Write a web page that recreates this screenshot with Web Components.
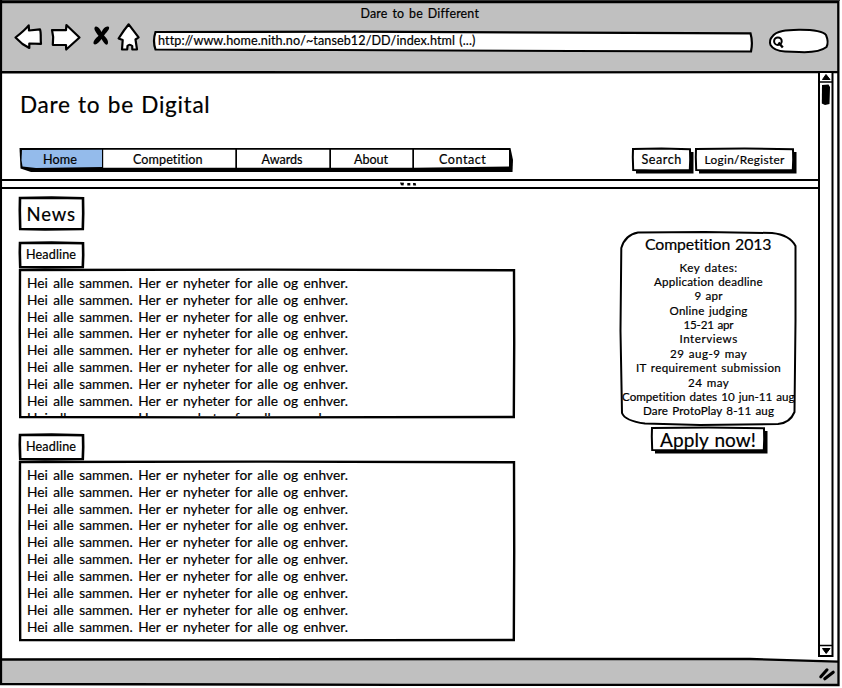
<!DOCTYPE html>
<html lang="en"><head><meta charset="utf-8"><title>Dare to be Different</title>
<style>
body{margin:0;background:#fff;color:#000;font-family:Lato,"Open Sans",sans-serif}
</style></head><body>
<browser-window></browser-window>
<script>
const define=(name,html,setup)=>customElements.define(name,class extends HTMLElement{
  connectedCallback(){
    if(this.shadowRoot)return;
    const root=this.attachShadow({mode:'open'});
    const t=document.createElement('template');
    t.innerHTML=html(this);
    root.append(t.content.cloneNode(true));
    if(setup)setup(this,root);
  }
});

/* A single line of text spaced out to a given width. */
define('fit-text',el=>`<style>
:host{display:block;width:${el.getAttribute('w')}px;font-size:${el.getAttribute('size')}px;white-space:nowrap;line-height:inherit;-webkit-text-stroke:.2px #000;flex:none}
span{display:inline-block;vertical-align:top;word-spacing:${el.getAttribute('gap')||1}px}
</style><span>${el.getAttribute('text')}</span>`,(el,root)=>{
  const s=root.querySelector('span');
  const w=s.getBoundingClientRect().width;
  s.style.letterSpacing=((+el.getAttribute('w')-w)/(el.getAttribute('text').length-.5))+'px';
});

/* A hand-drawn box: outline path in pixels plus an optional solid shadow. */
define('sketch-box',el=>{
  const w=+el.getAttribute('w'),h=+el.getAttribute('h'),s=+(el.getAttribute('shadow')||0),b=el.getAttribute('stroke')||2;
  const d=el.getAttribute('d')||`M1 1L${w*.5} .6L${w-1} 1.2L${w-.8} ${h*.5}L${w-1.2} ${h-1}L${w*.4} ${h-.6}L1.2 ${h-1}L.8 ${h*.4}Z`;
  return `<style>
:host{display:flex;position:relative;flex:none;box-sizing:border-box;width:${w}px;height:${h}px;align-items:center;justify-content:center}
svg{position:absolute;inset:0;overflow:visible;z-index:-1}
</style><svg width="${w}" height="${h}">${s?`<path d="M4 4H${w+s}V${h+s}H4Z"/>`:''}<path d="${d}" fill="#fff" stroke="#000" stroke-width="${b}" stroke-linejoin="miter"/></svg><slot></slot>`;
});

define('tool-bar',()=>`<style>
:host{display:grid;grid-template-rows:27px 1fr;height:73px}
.title{display:flex;justify-content:center;line-height:27px;padding-right:3px}
.row{display:flex;height:27px;padding-left:14px;align-items:flex-start}
svg{display:block;overflow:visible;flex:none}
.ink{fill:#fff;stroke:#000;stroke-width:2.2;stroke-linejoin:round}
.url{display:flex;position:relative;width:602px;height:22px;margin:3px 0 0 12px;padding-left:6px;box-sizing:border-box;line-height:21px;flex:none}
.url svg{position:absolute;left:0;top:0;z-index:-1}
.find{margin:0 0 0 14.5px}
</style>
<div class="title"><fit-text w="118" size="12.4" gap="1.5" text="Dare to be Different"></fit-text></div>
<div class="row">
<svg width="29" height="26" viewBox="0 0 29 26"><path class="ink" d="M1.5 10.5C6 7 11 3 14.7-1.6L15 3.5L26 2.3C27.4 6 26.3 12 27 16.8L15.3 16.5L15.3 21L8.5 17Z"/></svg>
<svg style="margin-left:8px" width="30" height="26"><path class="ink" d="M1 3L15 3.2L15.4-2L28.5 10.5L15.2 22.5L15 18L1.8 17.8Q3 10 1 3Z"/></svg>
<svg style="margin-left:12px" width="17" height="22"><path d="M2 0C0 2 3.5 6 5.5 8.7C3 11 0 14 .5 16.5C2 19 6 16 8.5 12C11 16 13 19 14.7 17C16 14 13.5 11 11 8.5C13 5.5 17 2.5 16 0C13-1.5 10.5 1 8.5 5C6.5 1 4-1.5 2 0Z"/></svg>
<svg style="margin-left:8px" width="22" height="26"><path class="ink" d="M10.7-2.7Q15 3 20.6 10.4L17.5 12.5L19 22.3L14.3 22.5L14.2 19Q11.5 16.5 9.5 19L9.2 22.5L4 22.5L4.7 13L.6 11.5Q6 3 10.7-2.7Z"/></svg>
<div class="url"><svg width="602" height="22"><path d="M3.5 2L200 1.7L598.5 3.3Q601 12 599 21.5L420 21L180 20L3.5 19.5Q.5 11 3.5 2Z" fill="#fff" stroke="#000" stroke-width="2.2"/></svg><fit-text w="317" size="12.6" text="http://www.home.nith.no/~tanseb12/DD/index.html (...)"></fit-text></div>
<svg class="find" width="60" height="26"><path d="M3 10C7 3 19 3 31 2.8C46 2.8 54 4 57 8Q60 15 57.5 20Q50 26 30 25L16 24.5Q5 24 1.5 18Q0 13 3 10Z" fill="#fff" stroke="#000" stroke-width="2"/><circle cx="8.9" cy="14.2" r="3.8" fill="none" stroke="#000" stroke-width="2"/><path d="M9.5 15.5L13.8 20.5" stroke="#000" stroke-width="2.4"/></svg>
</div>`);

define('nav-tabs',()=>`<style>
:host{display:flex;position:relative;width:493px;height:24px;flex:none;line-height:24px}
svg{position:absolute;left:0;top:0;overflow:visible;z-index:-1}
div{display:flex;justify-content:center;flex:none}
</style>
<svg width="493" height="24"><path d="M-.5 0L490.5 0L493 12L492.5 24L11 24L.5 20.5Z"/><path d="M2 2L82 1.7V19L16 20L2.5 18.5L1.5 12Z" fill="#94bbeb"/><path d="M83.2 1.8H215.3V19.8H83.2ZM217 1.8H309.3V19.8H217ZM311 1.8H392.3V19.8H311ZM394 1.8L489 2L489 18.5L394 19.8Z" fill="#fff"/></svg>
<div style="width:80px"><fit-text w="34" size="12.6" text="Home"></fit-text></div>
<div style="width:136px"><fit-text w="70" size="12.6" text="Competition"></fit-text></div>
<div style="width:92px"><fit-text w="41" size="12.6" text="Awards"></fit-text></div>
<div style="width:86px"><fit-text w="34" size="12.6" text="About"></fit-text></div>
<div style="width:97px"><fit-text w="47" size="12.6" text="Contact"></fit-text></div>`);

define('pane-splitter',()=>`<style>:host{display:block;width:816px;height:11px}svg{display:block;overflow:visible}</style>
<svg width="816" height="11"><path d="M0 1H816M0 9H816" stroke="#000" stroke-width="2"/><path d="M398 3.5l4 .2-.5 2.8-2.5-.3zM405.3 4h3v2.6h-3zM411 4h2.6l.6 2.5h-3z"/></svg>`);

define('news-item',el=>{
  const h=+el.getAttribute('h'),n=+el.getAttribute('rows');
  return `<style>
:host{display:block;width:496px}
sketch-box{justify-content:flex-start;padding-left:7px}
.head{padding-bottom:2px}
.body{align-items:flex-start;margin-top:1px;padding:5.8px 0 0 8px}
.lines{display:flex;flex-direction:column;height:${h-8}px;overflow:hidden;line-height:16.86px}
.lines fit-text{height:16.86px}
</style>
<sketch-box class="head" w="65" h="26" stroke="2.6"><fit-text w="50" size="12.6" text="Headline"></fit-text></sketch-box>
<sketch-box class="body" w="496" h="${h}" stroke="2.4"><div class="lines">${'<fit-text w="321" size="13.7" gap="1.8" text="Hei alle sammen. Her er nyheter for alle og enhver."></fit-text>'.repeat(n)}</div></sketch-box>`;
});

define('key-dates',()=>{
  const rows=[['Key dates:',58],['Application deadline',109],['9 apr',28],['Online judging',78],['15-21 apr',50],['Interviews',58],['29 aug-9 may',77],['IT requirement submission',145],['24 may',41],['Competition dates 10 jun-11 aug',173],['Dare ProtoPlay 8-11 aug',131]];
  return `<style>
:host{display:flex;flex-direction:column;align-items:center;width:177px}
.card{display:flex;flex-direction:column;align-items:center;line-height:14.4px}
.card>fit-text{height:14.4px}
.head{line-height:25px;height:25px;margin-bottom:4.5px}
.frame{align-items:flex-start}
.apply{margin:1px 0 0 -1px}
</style>
<sketch-box class="frame" w="177" h="195" d="M18 1.5L85 1L152 2Q170 4 175.5 15L175.5 90L174.5 181Q170 192 158 193L80 194L25 192.5Q5 190 2 182L.5 100L1.3 17Q5 4 18 1.5Z">
<div class="card"><div class="head"><fit-text w="127" size="15.8" gap="1" text="Competition 2013"></fit-text></div>${rows.map(([t,w])=>`<fit-text w="${w}" size="11.6" text="${t}"></fit-text>`).join('')}</div></sketch-box>
<sketch-box class="apply" w="114" h="24" shadow="2.5"><fit-text w="96" size="19" text="Apply now!"></fit-text></sketch-box>`;
});

define('scroll-bar',()=>`<style>:host{display:block;width:16px;height:584px;flex:none;margin-left:-1px}svg{display:block;overflow:visible}</style>
<svg width="16" height="584"><path d="M1 0V583H14.5V0" fill="#fff" stroke="#000" stroke-width="2"/><path d="M1 9H15M1 572.5H15" stroke="#000" stroke-width="1.6"/><path d="M8 1.5L12 6.5H4.5ZM4.5 575.5H12L8.2 580.5Z" stroke="#000" stroke-linejoin="round"/><path d="M4 12L10.5 11.5L12 14L11.5 31L7 32L3.8 30.5Z"/></svg>`);

define('site-page',()=>`<style>
:host{display:flex;height:586px;padding-left:2px}
.panes{width:817px;height:584px;flex:none}
header{box-sizing:border-box;height:106px;padding:14px 0 0 17px}
.name{line-height:36px;height:61px;padding-left:1px}
.bar{display:flex;align-items:flex-start;padding-left:1px;line-height:18px}
.bar sketch-box{margin-right:4px}
.bar nav-tabs{margin-right:119px}
main{display:flex;justify-content:space-between;padding:7px 22px 0 17px}
.news{display:flex;flex-direction:column}
.news news-item{margin-bottom:16px}
.top{margin-bottom:12px;padding-right:1px}
key-dates{margin-top:34px}
</style>
<div class="panes"><header><div class="name"><fit-text w="190" size="22.6" gap="1" text="Dare to be Digital"></fit-text></div>
<div class="bar"><nav-tabs></nav-tabs><sketch-box w="59" h="23" shadow="2.5"><fit-text w="40" size="12.6" text="Search"></fit-text></sketch-box><sketch-box w="99" h="23" shadow="2.5"><fit-text w="80" size="11.8" text="Login/Register"></fit-text></sketch-box></div></header>
<pane-splitter></pane-splitter>
<main><div class="news"><sketch-box class="top" w="65" h="33" stroke="2.6"><fit-text w="49" size="18.5" text="News"></fit-text></sketch-box>
<news-item h="149" rows="9"></news-item><news-item h="180" rows="10"></news-item></div><key-dates></key-dates></main></div>
<scroll-bar></scroll-bar>`);

define('browser-window',()=>`<style>
:host{display:block;position:relative;width:842px;height:688px;overflow:hidden;isolation:isolate}
.frame{position:absolute;inset:0;z-index:-2}
</style>
<svg class="frame" width="842" height="688"><path d="M1 1H838V72H2ZM2 659L750 659L838 662V685L2 684Z" fill="#c0c0c0"/><path d="M0 .5H840" stroke="#444"/><path d="M1 0L.8 400L1 684L400 684.8L838.5 685L838.6 400L838.3 2L1 2M2 72L400 72.4L838 72M1 659.5L500 659L750 659L838 661.7" fill="none" stroke="#000" stroke-width="2.3"/><path d="M820.8 676.8L827 669.8M824.8 678.8L833.2 672.2" fill="none" stroke="#000" stroke-width="3.1" stroke-linecap="round"/></svg>
<tool-bar></tool-bar><site-page></site-page>`);
</script></body></html>
